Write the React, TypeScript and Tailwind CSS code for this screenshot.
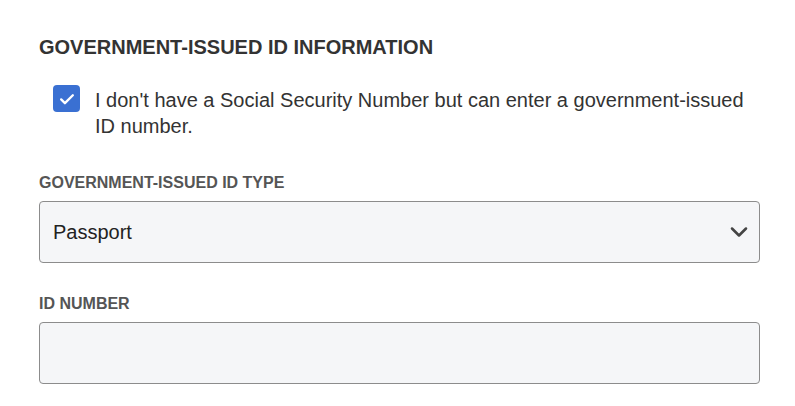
import { ChevronDown } from "lucide-react";

export default function App() {
  return (
    <div className="min-h-screen bg-white pl-[39px] pr-[35px] pt-[35px] font-['Liberation_Sans',Arial,sans-serif] text-[#333]">
      <h2 className="text-[20px] font-bold leading-[24px] text-[#333]">
        GOVERNMENT-ISSUED ID INFORMATION
      </h2>

      <label className="mt-[28px] flex items-start gap-[15px] pl-[14px]">
        <span className="mt-[-2px] flex h-[27px] w-[27px] shrink-0 items-center justify-center rounded-[4px] bg-[#3a70d2]">
          <svg viewBox="0 0 24 24" className="h-[20px] w-[20px]" fill="none" stroke="white" strokeWidth="2.8" strokeLinecap="round" strokeLinejoin="round">
            <path d="M5 12.5l4.5 4.5L19 7.5" />
          </svg>
        </span>
        <span className="text-[20px] leading-[26px] text-[#333]">
          I don't have a Social Security Number but can enter a government-issued ID number.
        </span>
      </label>

      <div className="mt-[35px]">
        <div className="text-[16px] font-bold leading-[18px] text-[#555]">GOVERNMENT-ISSUED ID TYPE</div>
        <div className="mt-[9px] flex h-[62px] items-center justify-between rounded-[4px] border border-[#8c8c8c] bg-[#f5f6f8] pl-[13px] pr-[6px]">
          <span className="text-[20px] text-[#222]">Passport</span>
          <ChevronDown className="h-[28px] w-[28px] text-[#444]" strokeWidth={2.2} />
        </div>
      </div>

      <div className="mt-[32px]">
        <div className="text-[16px] font-bold leading-[18px] text-[#555]">ID NUMBER</div>
        <div className="mt-[9px] h-[62px] rounded-[4px] border border-[#8c8c8c] bg-[#f5f6f8]" />
      </div>
    </div>
  );
}
